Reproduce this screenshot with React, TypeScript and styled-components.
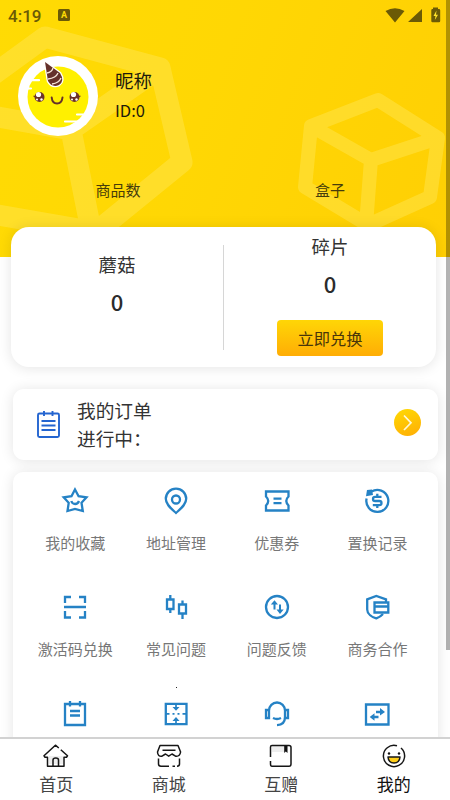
import React from 'react';
import styled, { createGlobalStyle } from 'styled-components';

const GlobalStyle = createGlobalStyle`
  *, *::before, *::after { box-sizing: border-box; }
  html, body { margin: 0; height: 100%; overflow: hidden; }
  body { background: #fff; font-family: "Noto Sans CJK SC", "Noto Sans", sans-serif; color: #333; }
  svg { display: block; }
`;

const Screen = styled.div`
  position: relative;
  display: flex;
  flex-direction: column;
  height: 800px;
  width: 450px;
  overflow: hidden;
  background: #fff;
`;

const Content = styled.main`
  flex: 1;
  min-height: 0;
  overflow: hidden;
`;

const Hero = styled.header`
  position: relative;
  height: 257px;
  background: linear-gradient(110deg, #ffdb04 0%, #ffd704 45%, #ffcf04 100%);
`;

const Pattern = styled.svg`
  position: absolute;
  inset: 0;
`;

const HeroBody = styled.div`
  position: relative;
  display: flex;
  flex-direction: column;
`;

const StatusBar = styled.div`
  display: flex;
  align-items: center;
  height: 32px;
  padding: 0 9px 0 8px;
  color: #6b5a06;
`;

const Clock = styled.span`
  font: 500 17px/32px Roboto, sans-serif;
  width: 50px;
`;

const KeyboardBadge = styled.span`
  width: 12px;
  height: 12px;
  margin-top: -2px;
  border-radius: 1.5px;
  background: #6b5a06;
  color: #ffdc04;
  font: 700 9px/12px Roboto, sans-serif;
  text-align: center;
`;

const SystemIcons = styled.div`
  margin-left: auto;
`;

const Profile = styled.div`
  display: flex;
  align-items: center;
  gap: 17px;
  height: 80px;
  margin: 24px 0 0 18px;
`;

const Identity = styled.div`
  display: flex;
  flex-direction: column;
  margin-top: -3px;
  color: #1d1a0c;
`;

const Nickname = styled.span`
  font-size: 18.5px;
  line-height: 30px;
`;

const UserId = styled.span`
  font-size: 16.5px;
  line-height: 30px;
`;

const Counters = styled.div`
  display: grid;
  grid-template-columns: 212px 212px;
  margin: 40px 0 0 12px;
  text-align: center;
  font-size: 15px;
  line-height: 28px;
  color: #463c0b;
`;

const Panel = styled.section`
  position: relative;
  background: #fff;
  box-shadow: 0 1px 14px rgba(0, 0, 0, 0.11);
`;

const Wallet = styled(Panel)`
  display: flex;
  width: 425px;
  height: 140px;
  margin: -30px 0 0 11px;
  border-radius: 18px;
`;

const Balance = styled.div<{ $top: number }>`
  flex: 1;
  display: flex;
  flex-direction: column;
  align-items: center;
  padding-top: ${(p) => p.$top}px;
`;

const BalanceLabel = styled.span`
  font-size: 18.5px;
  line-height: 28px;
`;

const BalanceValue = styled.strong`
  margin-top: 8px;
  font-size: 22px;
  font-weight: 500;
  line-height: 30px;
  color: #2b2b2b;
`;

const Separator = styled.div`
  width: 1px;
  height: 105px;
  margin-top: 18px;
  background: #d6d6d6;
`;

const ExchangeButton = styled.button`
  width: 106px;
  height: 36px;
  margin-top: 22px;
  padding: 0;
  border: 0;
  border-radius: 4px;
  background: linear-gradient(#ffd606, #ffad05);
  color: #493609;
  font: 400 16.3px/35px "Noto Sans CJK SC", sans-serif;
`;

const Services = styled.div`
  height: 370px;
  padding: 22px 0 0 13px;
`;

const Orders = styled(Panel)`
  display: flex;
  align-items: center;
  width: 425px;
  height: 71px;
  padding: 0 17px 0 23px;
  border-radius: 11px;
`;

const OrderText = styled.div`
  flex: 1;
  margin: -2px 0 0 16px;
  font-size: 18.7px;
  line-height: 28px;
`;

const ArrowButton = styled.button`
  display: grid;
  place-items: center;
  width: 27px;
  height: 27px;
  margin-top: -5px;
  padding: 0;
  border: 0;
  border-radius: 50%;
  background: linear-gradient(160deg, #ffda04, #ffad05);
`;

const Menu = styled(Panel)`
  display: grid;
  grid-template-columns: repeat(4, 100.7px);
  grid-auto-rows: 106px;
  width: 425px;
  height: 320px;
  margin-top: 12px;
  padding: 13px 11px 0 12px;
  border-radius: 10px;
`;

const MenuItem = styled.div`
  display: flex;
  flex-direction: column;
  align-items: center;
  gap: 12px;
  font-size: 15px;
  line-height: 28px;
  color: #777;
  white-space: nowrap;
`;

const Speck = styled.i`
  position: absolute;
  left: 163px;
  top: 215px;
  width: 1px;
  height: 1px;
  background: #222;
`;

const TabBar = styled.nav`
  position: relative;
  display: grid;
  grid-template-columns: repeat(4, 1fr);
  height: 63px;
  border-top: 2px solid #d2d2d2;
  background: #fff;
`;

const Tab = styled.a<{ $active?: boolean }>`
  display: flex;
  flex-direction: column;
  align-items: center;
  padding-top: 3px;
  font-size: 17px;
  line-height: 28px;
  color: ${(p) => (p.$active ? '#111' : '#444')};
`;

const ScrollThumb = styled.div`
  position: absolute;
  top: 0;
  right: 0;
  width: 4px;
  height: 650px;
  background: rgba(0, 0, 0, 0.3);
`;

const MenuIcon = ({ children }: { children: React.ReactNode }) => (
  <svg width="32" height="32" viewBox="0 0 32 32" fill="none" stroke="#2582c5" strokeWidth="2.3">
    {children}
  </svg>
);

const Avatar = () => (
  <svg width="80" height="80" viewBox="0 0 80 80">
    <circle cx="40" cy="40" r="40" fill="#fff" />
    <circle cx="40" cy="41" r="30.5" fill="#fff000" />
    <path d="M6 24.2H21M6 32.5H13M59 58.5H73M47 65.5H65" stroke="#fff" strokeWidth="2.2" strokeLinecap="round" />
    <path d="M54 62H60" stroke="#fff000" strokeWidth="2" strokeLinecap="round" />
    <path d="M27 6L42 17Q47 25 41 29Q34 32 30 25Z" fill="#65312b" stroke="#fff" strokeWidth="2.6" strokeLinejoin="round" />
    <path d="M27 6L42 17Q47 25 41 29Q34 32 30 25Z" fill="#65312b" />
    <path d="M29 17Q34 16 35 12M30 23Q38 22 40 17M34 28Q41 27 43 22" fill="none" stroke="#f5e5d8" strokeWidth="1.3" />
    <g fill="#6c322b">
      <circle cx="21.5" cy="41" r="5" />
      <circle cx="56.5" cy="41" r="5" />
    </g>
    <g fill="#fff">
      <circle cx="20.5" cy="38.5" r="2.6" />
      <circle cx="23.5" cy="43.5" r="1.2" />
      <circle cx="19" cy="43.5" r="1" />
      <circle cx="55.5" cy="38.5" r="2.6" />
      <circle cx="58.5" cy="43.5" r="1.2" />
      <circle cx="54" cy="43.5" r="1" />
    </g>
    <path d="M15.5 40L18 41M62.5 40L60 41" stroke="#6c322b" strokeWidth="1.2" />
    <path d="M33.7 41.5C34.5 49.5 43.5 49.5 44.5 41.5" fill="none" stroke="#65312b" strokeWidth="2" strokeLinecap="round" />
  </svg>
);

const menu = [
  { label: '我的收藏', icon: <><path d="M16 4.5L19.6 11.2L27.5 12.4L22.5 17.8L23.8 26L16 24L8.5 26L9.7 17.8L4.7 12.4L12.5 11.2Z" /><path d="M12.3 16C13.6 20 18.5 20 20 16" /></> },
  { label: '地址管理', icon: <><path d="M16 28C11 23.4 5.8 19.4 5.8 13.8A10.2 10.2 0 0 1 26.2 13.8C26.2 19.4 21 23.4 16 28Z" /><circle cx="16" cy="14.5" r="4" /></> },
  { label: '优惠券', icon: <><path d="M5 6.5H27.5V11.5Q23 16 27.5 20.5V25.5H5V20.5Q9.5 16 5 11.5Z" /><path d="M12.5 13.6H20.5M12.5 18.1H20.5" /></> },
  { label: '置换记录', icon: <><path d="M5.6 13.5A11 11 0 1 0 10.5 6.6" /><path d="M11 4.5L12 10L5 11.3L6 5Z" fill="#2582c5" stroke="none" /><path d="M20.5 11.8H14.2Q12 11.8 12 13.9T14.2 16H18.3Q20.5 16 20.5 18.1T18.3 20.2H11.8M16.3 8.8V11.8M16.3 20.2V23" /></> },
  { label: '激活码兑换', icon: <path d="M6 12V6H12M20 6H26V12M26 20V26.5H20M12 26.5H6V20M5 16H27" /> },
  { label: '常见问题', icon: <path d="M7 8.5H13.5V18H7ZM10.3 4V8.5M10.3 18V22M19 13.5H26V22.5H19ZM22.5 9.5V13.5M22.5 22.5V28" /> },
  { label: '问题反馈', icon: <><circle cx="16" cy="16" r="11" /><path d="M13.5 18.5V11M19 13.5V21" strokeWidth="2" /><path d="M9.8 13.5L13.5 9.2L17 13.5ZM15.5 18.5H22.7L19 23Z" fill="#2582c5" stroke="none" /></> },
  { label: '商务合作', icon: <><path d="M25 11V8.4L15.3 5L6.2 8.4V18.5C6.2 23 11 26.2 15.3 27.4C18 26.4 20.2 25 22 23" /><path d="M13.5 11.5H27.3V21.5H13.5ZM13.5 15.5H27" /></> },
  { label: '', icon: <path d="M6 7H26V28H6ZM11 4V9.5M21 4V9.5M11 14H21M11 18.5H21" /> },
  { label: '', icon: <><path d="M5.8 6.8H26.5V27.2H5.8Z" /><path d="M6 16.8H9.5M12.5 16.8H14.5M17.5 16.8H19.5M22.5 16.8H26M16 8V11M16 22.5V26.5" strokeWidth="1.7" /><path d="M12.5 10H19.5L16 13.8ZM12.5 24H19.5L16 20Z" fill="#2582c5" stroke="none" /></> },
  { label: '', icon: <path d="M8 13.5A8 8 0 0 1 24 13.5V20Q24 27.8 16 28.2M8 13H5V21H8ZM24 13H27V21H24ZM12 21Q16 23 20 21" /> },
  { label: '', icon: <><path d="M5 7.5H27.5V27.5H5Z" /><path d="M15 15H21M11.5 20H17.5" /><path d="M19 11L24 15L19 18.5ZM13.5 16.2L8.7 20L13.5 23.8Z" fill="#2582c5" stroke="none" /></> },
];

const tabs = [
  { label: '首页', icon: <><path d="M7 14H21V22H7Z" fill="#eee" stroke="none" /><path d="M10.5 24.2H5.5V15.2H3L2 13.8L13.4 3.2L16.8 6M18.8 7.8L25.5 13.8L24.5 15.2H22V24.2H11V18C11 15.2 16.5 15.2 16.5 18V24" /></> },
  { label: '商城', icon: <><path d="M5 3.5H23L25.6 10Q24.8 14.8 20.5 14.2L17 12L13.7 14.2L10.5 12L7 14.2Q2.8 14.8 2.5 10ZM7.5 8.2H20.5M3.5 16.5V22Q3.5 24.2 6 24.2H14M17.5 24.2H20M22 24.2Q24.5 24.2 24.5 22V16.5" /></> },
  { label: '互赠', icon: <><path d="M5 4H18V10H5Z" fill="#eee" stroke="none" /><path d="M3.5 15V5Q3.5 3.5 5 3.5H22Q24 3.5 24 5.5V22Q24 24.3 22 24.3H5Q3.5 24.3 3.5 22V19" /><path d="M17.2 4H20.5V11L18.8 9.5L17.2 11Z" fill="#111" stroke="none" /></> },
  { label: '我的', active: true, icon: <><path d="M21 6A10.6 10.6 0 1 1 17 3.8" /><circle cx="9" cy="11.5" r="1.2" fill="#111" stroke="none" /><circle cx="19" cy="11.5" r="1.2" fill="#111" stroke="none" /><path d="M8 15H20Q19.5 21 14 21T8 15Z" fill="#ffcf1b" /></> },
];

export default function App() {
  return (
    <Screen>
      <GlobalStyle />
      <Content>
        <Hero>
          <Pattern width="450" height="257" fill="none" stroke="#ffe44d" strokeOpacity="0.52" strokeLinejoin="round">
            <path strokeWidth="21" d="M-25 88L45 37L160 68L182 162L96 232L-25 211M160 68L71 130L-25 113M71 130L93 240" />
            <path strokeWidth="14" d="M378 100L438 138L430 197L368 225L305 187L311 126ZM311 126L371 160L438 138M371 160L366 225" />
          </Pattern>
          <HeroBody>
            <StatusBar>
              <Clock>4:19</Clock>
              <KeyboardBadge>A</KeyboardBadge>
              <SystemIcons>
                <svg width="56" height="18" viewBox="0 0 56 18" fill="#6b5a06">
                  <path d="M.5 4Q10 -1.5 19.5 4L10 15.5ZM23 15H37V2ZM48 2V.5H53V2H54Q55.2 2 55.2 3.2V14Q55.2 15.2 54 15.2H47.5Q46.3 15.2 46.3 14V3.2Q46.3 2 47.5 2Z" />
                  <path d="M51.5 3.5L48.5 9H50.5L49.8 13L53 7.7H51Z" fill="#ffe22b" />
                </svg>
              </SystemIcons>
            </StatusBar>
            <Profile>
              <Avatar />
              <Identity>
                <Nickname>昵称</Nickname>
                <UserId>ID:0</UserId>
              </Identity>
            </Profile>
            <Counters>
              <span>商品数</span>
              <span>盒子</span>
            </Counters>
          </HeroBody>
        </Hero>
        <Wallet>
          <Balance $top={23}>
            <BalanceLabel>蘑菇</BalanceLabel>
            <BalanceValue>0</BalanceValue>
          </Balance>
          <Separator />
          <Balance $top={5}>
            <BalanceLabel>碎片</BalanceLabel>
            <BalanceValue>0</BalanceValue>
            <ExchangeButton>立即兑换</ExchangeButton>
          </Balance>
        </Wallet>
        <Services>
          <Orders>
            <svg width="25" height="30" viewBox="0 0 25 30" fill="none" stroke="#2465d0" strokeWidth="1.9">
              <rect x="2" y="3.5" width="21" height="23.5" rx="1.5" />
              <path d="M8 1V6M16.5 1V6M5.5 11H19.5M5.5 15.5H19.5M5.5 20H19.5" />
            </svg>
            <OrderText>
              <div>我的订单</div>
              <div>进行中：</div>
            </OrderText>
            <ArrowButton aria-label="我的订单">
              <svg width="27" height="27" fill="none" stroke="#fff8d8" strokeWidth="1.7">
                <path d="M10 6.5L17 13.8L10 21" />
              </svg>
            </ArrowButton>
          </Orders>
          <Menu>
            {menu.map((item, i) => (
              <MenuItem key={i}>
                <MenuIcon>{item.icon}</MenuIcon>
                {item.label && <span>{item.label}</span>}
              </MenuItem>
            ))}
            <Speck />
          </Menu>
        </Services>
      </Content>
      <TabBar>
        {tabs.map((tab) => (
          <Tab key={tab.label} $active={tab.active}>
            <svg width="28" height="28" viewBox="0 0 28 28" fill="none" stroke="#161616" strokeWidth="1.5" strokeLinejoin="round">
              {tab.icon}
            </svg>
            <span>{tab.label}</span>
          </Tab>
        ))}
      </TabBar>
      <ScrollThumb />
    </Screen>
  );
}
